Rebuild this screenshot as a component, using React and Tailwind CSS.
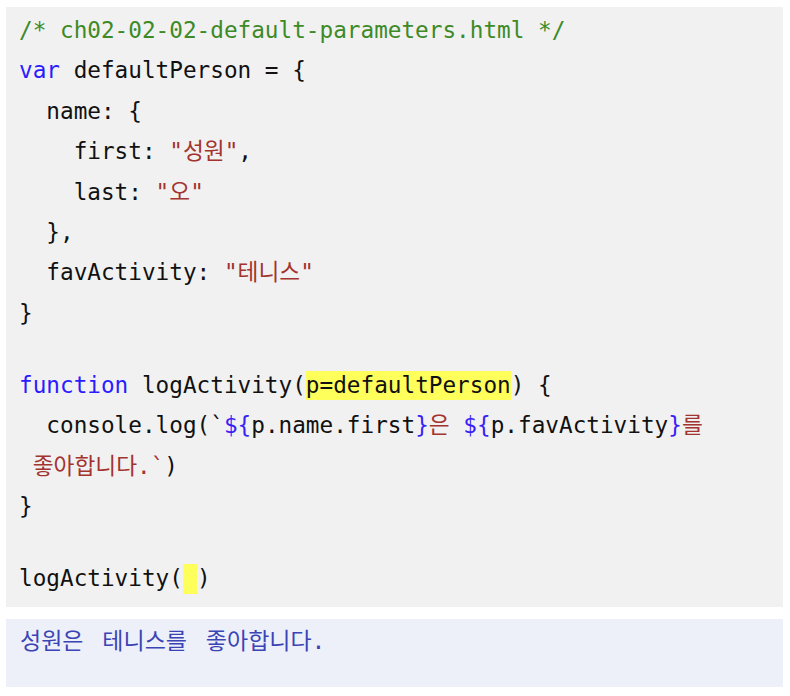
export default function App() {
  const mono = { fontFamily: '"DejaVu Sans Mono", "Noto Sans CJK KR", monospace' };
  const K = ({ children }) => <span className="text-[#2a1cff]">{children}</span>;
  const S = ({ children }) => <span className="text-[#a3332f]">{children}</span>;
  const T = ({ children }) => <span className="text-[#3a1ff5]">{children}</span>;
  const Line = ({ children }) => (
    <div className="h-[40.4px] leading-[40.4px] whitespace-pre">{children}</div>
  );
  const Blank = () => <div className="h-[31.6px]" />;
  return (
    <div className="w-[790px] h-[696px] bg-white pt-[7px] px-[6px]">
      <div
        className="w-[777px] h-[600px] bg-[#f1f1f1] pl-[13px] pt-[3px] text-[22.7px] text-[#111]"
        style={mono}
      >
        <Line>
          <span className="text-[#3d8a27]">/* ch02-02-02-default-parameters.html */</span>
        </Line>
        <Line>
          <K>var</K> defaultPerson = {"{"}
        </Line>
        <Line>{"  name: {"}</Line>
        <Line>
          {"    first: "}
          <S>"성원"</S>,
        </Line>
        <Line>
          {"    last: "}
          <S>"오"</S>
        </Line>
        <Line>{"  },"}</Line>
        <Line>
          {"  favActivity: "}
          <S>"테니스"</S>
        </Line>
        <Line>{"}"}</Line>
        <Blank />
        <Line>
          <K>function</K> logActivity(
          <span className="bg-[#ffff5c] inline-block leading-[29px]">p=defaultPerson</span>) {"{"}
        </Line>
        <Line>
          {"  console.log(`"}
          <T>{"${"}</T>p.name.first<T>{"}"}</T>
          <S>은 </S>
          <T>{"${"}</T>p.favActivity<T>{"}"}</T>
          <S>를</S>
        </Line>
        <Line>
          <S>{" 좋아합니다.`"}</S>)
        </Line>
        <Line>{"}"}</Line>
        <Blank />
        <Line>
          logActivity(
          <span className="bg-[#ffff5c] inline-block w-[14px] h-[30px] align-middle" />)
        </Line>
      </div>
      <div
        className="mt-[12px] w-[777px] h-[68px] bg-[#edf0f9] pl-[14px] pt-[7px] text-[23px] leading-[30px] text-[#3b44b5] whitespace-pre [word-spacing:5px]"
        style={mono}
      >
        성원은 테니스를 좋아합니다.
      </div>
    </div>
  );
}
